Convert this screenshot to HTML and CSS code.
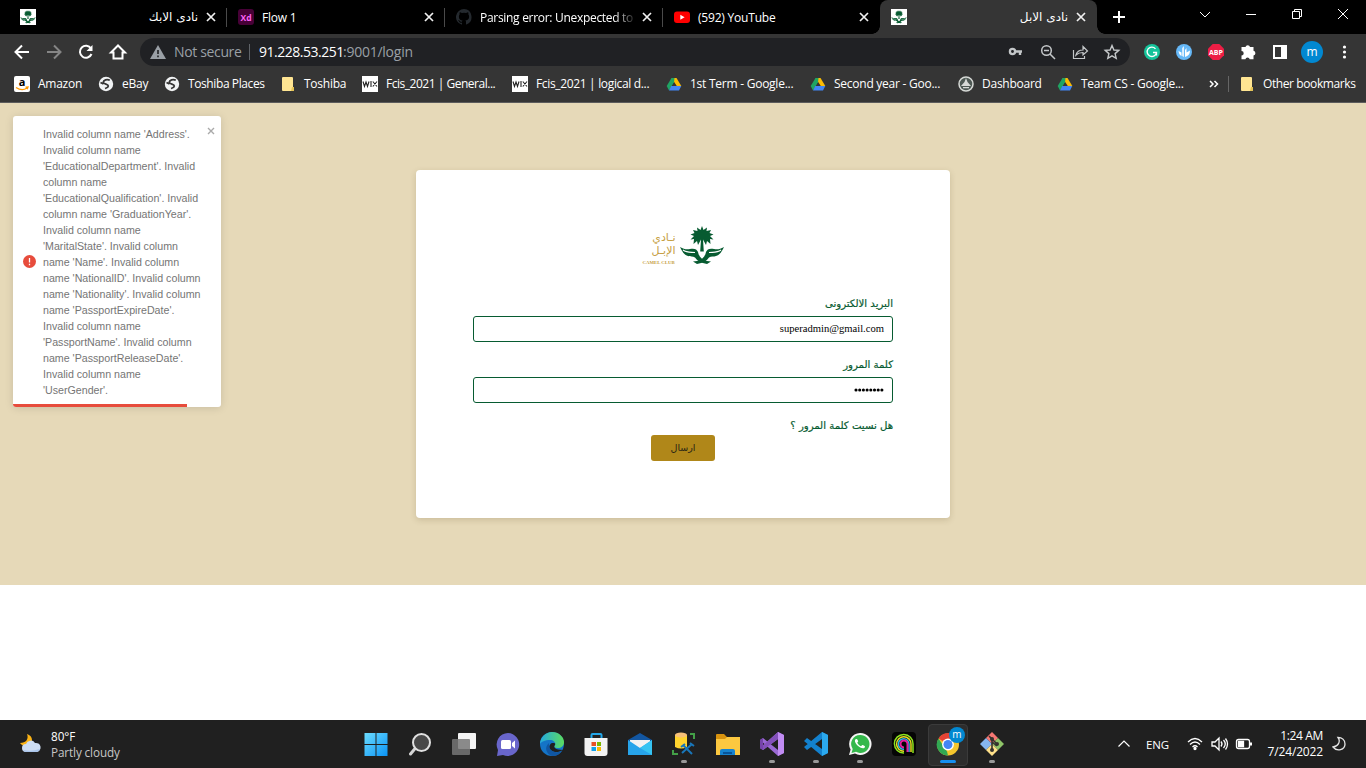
FILE: index.html
```html
<!DOCTYPE html>
<html lang="en">
<head>
<meta charset="utf-8">
<title>نادى الابل</title>
<link rel="stylesheet" href="styles.css">
</head>
<body>
<svg class="defs" width="0" height="0">
  <defs>
    <symbol id="close" viewBox="0 0 10 10"><path d="M1 1l8 8M9 1L1 9" fill="none" stroke="#f1f1f1" stroke-width="1.7"/></symbol>
    <symbol id="palm" viewBox="0 0 44 40">
      <path fill="#075b31" d="M22 0l1.500 4L27 1.500 26.500 5l4.500-1-1.500 3 4 1.500-3.500 1.500 3.500 3.500-3.500-.5.500 5-3.500-3-1 4-3-5.500.8 12h-3.600L21 13.500 18 19l-1-4-3.500 3 .5-5-3.500.5 3.500-3.500-3.500-1.500 4-1.500L13 4l4.500 1L17 1.500 20.500 4z"/>
      <path fill="#075b31" d="M0 21c4 2.500 7 2.500 10 2 4-1 7 0 8 3 1 5 4 8 9 9l4 .5-4 2.500c-6-1-10-3-12-6.500-2-1.500-5-.5-7-1.500-4-1-6-5-8-9z"/>
      <path fill="#075b31" d="M44 21c-4 2.500-7 2.500-10 2-4-1-7 0-8 3-1 5-4 8-9 9l-4 .5 4 2.500c6-1 10-3 12-6.500 2-1.500 5-.5 7-1.500 4-1 6-5 8-9z"/>
      <path d="M3 24c4 3 8 2 12 2.500M41 24c-4 3-8 2-12 2.500" fill="none" stroke="#fff" stroke-width="1.200"/>
    </symbol>
    <symbol id="globe" viewBox="0 0 16 16"><circle cx="8" cy="8" r="7.200" fill="#f1f3f4"/><path d="M11.800 4.300C9 2.800 5.500 4.200 5.300 6.200c0 2.200 5 1.800 5 3.800 0 1.700-2 2-3.300 2.500M2.500 6.500l3 1.500" fill="none" stroke="#353535" stroke-width="1.800"/></symbol>
    <symbol id="folder" viewBox="0 0 16 16"><path d="M2 2q0-1 1-1h9q1 0 1 1v9h1v3q0 1-1 1H3q-1 0-1-1z" fill="#ffe592"/><path d="M12 11h2v3q0 1-1 1h-2z" fill="#e6c555"/></symbol>
    <symbol id="wix" viewBox="0 0 16 16"><path d="M0 0h16v16H0z" fill="#fff"/><path d="M1 5.500l1.500 5L4 6l1.500 4.500L7 5.500M9 5v6M10.800 5.500l4.200 5M15 5.500l-4.200 5" fill="none" stroke="#222" stroke-width="1.100"/></symbol>
    <symbol id="drive" viewBox="0 0 16 16"><path d="M5.500 2h5L15.300 10h-4.500z" fill="#fbbc04"/><path d="M5.500 2h3L8 6.400 3 14.500.7 10z" fill="#1fa463"/><path d="M3 14.500L5.200 10h10.100L13 14.500z" fill="#4285f4"/><path d="M8 6.500l2 3.500H6z" fill="#353535"/></symbol>
  </defs>
</svg>

<div class="tabs">
  <div class="tab first"><span class="fav white"><svg width="16" height="14"><use href="#palm"/></svg></span><span class="name ar">نادى الابك</span><svg class="x"><use href="#close"/></svg></div>
  <div class="tab"><svg class="fav" viewBox="0 0 16 16"><rect width="16" height="16" rx="3" fill="#470137"/><text x="8" y="11.500" text-anchor="middle" class="xd">Xd</text></svg><span class="name">Flow 1</span><svg class="x"><use href="#close"/></svg></div>
  <div class="tab"><svg class="fav" viewBox="0 0 16 16"><path fill="#24292e" d="M8 0a8 8 0 0 0-2.500 15.600c.4.100.5-.2.500-.4v-1.500c-2.200.5-2.700-1-2.700-1-.4-.9-.9-1.200-.9-1.200-.7-.5.100-.5.100-.5.800.1 1.200.8 1.200.8.700 1.300 1.900.9 2.300.7.100-.5.300-.9.500-1.100-1.800-.2-3.600-.9-3.600-4 0-.9.300-1.600.8-2.100-.1-.2-.4-1 .1-2.100 0 0 .7-.2 2.200.8a7.600 7.600 0 0 1 4 0c1.500-1 2.200-.8 2.200-.8.400 1.100.2 1.900.1 2.100.5.600.8 1.300.8 2.100 0 3.100-1.900 3.700-3.700 3.900.3.300.6.800.6 1.500v2.200c0 .2.100.5.500.4A8 8 0 0 0 8 0z"/></svg><span class="name fade">Parsing error: Unexpected tol</span><svg class="x"><use href="#close"/></svg></div>
  <div class="tab plain"><svg class="fav" viewBox="0 0 16 16"><rect y="2.500" width="16" height="11.500" rx="3" fill="#f00"/><path d="M6.300 5.800v5l4.300-2.500z" fill="#fff"/></svg><span class="name">(592) YouTube</span><svg class="x"><use href="#close"/></svg></div>
  <div class="tab active"><span class="fav white"><svg width="16" height="14"><use href="#palm"/></svg></span><span class="name ar">نادى الابل</span><svg class="x"><use href="#close"/></svg></div>
  <svg class="plus" width="14" height="14"><path d="M7 1v12M1 7h12" stroke="#fff" stroke-width="2"/></svg>
  <svg class="winctl" width="170" height="28" fill="none" stroke="#fff"><path d="M15 12l5 5 5-5M61 14.500h10M107.500 11.500h7v7h-7zM109.500 11.500v-2h7v7h-2M153 9l10 10M163 9l-10 10"/></svg>
</div>

<div class="toolbar">
  <svg class="nav" width="132" height="28" fill="none" stroke="#fff" stroke-width="2"><path d="M29 14H16M22 7.500L15.500 14l6.500 6.500"/><path d="M47 14h13M54 7.500l6.500 6.500-6.500 6.500" stroke="#858585"/><path d="M91 10.500A6 6 0 1 0 91.500 16"/><path d="M92.500 7v6h-6z" fill="#fff" stroke="none"/><path d="M113.500 20.500v-6h-2.500l7-7 7 7h-2.500v6z"/></svg>
  <div class="omni">
    <svg class="warn" width="16" height="14"><path d="M8 0l8 14H0z" fill="#9aa0a6"/><path d="M8 5v4M8 10.500v1.800" stroke="#202124" stroke-width="1.600"/></svg>
    <span class="secure">Not secure</span><span class="bar"></span><span class="host">91.228.53.251</span><span class="path">:9001/login</span>
    <svg class="omni-icons" width="121" height="24" fill="none" stroke="#c4c7c9" stroke-width="1.500"><path d="M8.500 11.500H15M13 11.500v3.500" stroke-width="2.400"/><circle cx="5.500" cy="11.500" r="2.600" stroke-width="2.300"/><circle cx="39.500" cy="10.500" r="4.800"/><path d="M37 10.500h5M43 14l5 5"/><path d="M66.500 10v8.500h11V16M69 15c1-4 4-5 7-5V6.500l4.500 4.500-4.500 4v-2.500c-3 0-5 .5-7 2.500z" stroke-width="1.200"/><path d="M105 5.500l1.900 4.500 4.900.4-3.700 3.200 1.100 4.800-4.200-2.500-4.200 2.500 1.100-4.800-3.700-3.200 4.900-.4z" stroke-width="1.400"/></svg>
  </div>
  <svg class="ext" width="226" height="28">
    <circle cx="12" cy="14" r="8" fill="#15c39a"/><path d="M15.500 10.800a4.700 4.700 0 1 0 1 3.700h-3.500M16.500 14.500v3" fill="none" stroke="#fff" stroke-width="1.300"/>
    <circle cx="44" cy="14" r="8" fill="#66b8f7"/><path d="M38.500 13l3 1.500V18q-2.500-1-3-5zM42.300 10l1.500-2v11L42.300 18zM45 19V12l1.500-2v4.500l3.500-2q0 5-5 6.500z" fill="#fff"/>
    <path d="M72.700 6h6.600l4.700 4.700v6.600L79.300 22h-6.600L68 17.300v-6.600z" fill="#ed1e45"/><text x="76" y="16.800" text-anchor="middle" class="abp">ABP</text>
    <path d="M102 9h3.500a2.300 2.300 0 0 1 4.500 0h3.500v3.800a2.400 2.400 0 0 1 0 4.700v3.800h-3.800a2.200 2.200 0 0 0-4.300 0H101.500v-3.900a2.200 2.200 0 0 0 0-4.400V9z" fill="#fff"/>
    <path d="M134 8h12v12h-12z" fill="none" stroke="#fff" stroke-width="2"/><path d="M141 8h6v12h-6z" fill="#fff"/>
    <circle cx="172" cy="14" r="11" fill="#0288d1"/><text x="172" y="18" text-anchor="middle" class="avatar">m</text>
    <g fill="#fff"><circle cx="204.500" cy="9" r="1.600"/><circle cx="204.500" cy="14" r="1.600"/><circle cx="204.500" cy="19" r="1.600"/></g>
  </svg>
</div>

<div class="bookmarks">
  <div><svg class="tile" viewBox="0 0 16 16"><rect width="16" height="16" rx="2" fill="#fff"/><text x="8" y="9.800" text-anchor="middle" class="amz">a</text><path d="M2 11.500q6 4 11 .5M11.500 11.200l2.500-.2-.8 2.200" stroke="#f90" fill="none" stroke-width="1.300"/></svg>Amazon</div>
  <div><svg><use href="#globe"/></svg>eBay</div>
  <div class="places"><svg><use href="#globe"/></svg>Toshiba Places</div>
  <div><svg><use href="#folder"/></svg>Toshiba</div>
  <div class="wix"><svg><use href="#wix"/></svg>Fcis_2021 | General...</div>
  <div class="wix logical"><svg><use href="#wix"/></svg>Fcis_2021 | logical d...</div>
  <div><svg><use href="#drive"/></svg>1st Term - Google...</div>
  <div><svg><use href="#drive"/></svg>Second year - Goo...</div>
  <div><svg viewBox="0 0 16 16"><circle cx="8" cy="8" r="7" fill="#4d5853" stroke="#d6d9d6" stroke-width="1.500"/><path d="M8 2l1.500 4 3.500 4H3l3.500-4zM5 11h6v1.300H5z" fill="#d6d9d6"/></svg>Dashboard</div>
  <div><svg><use href="#drive"/></svg>Team CS - Google...</div>
  <div><svg class="more" width="10" height="8" viewBox="0 0 10 8"><path d="M1 1l3 3-3 3M5.500 1l3 3-3 3" fill="none" stroke="#fff" stroke-width="1.500"/></svg></div>
  <div class="other"><svg><use href="#folder"/></svg>Other bookmarks</div>
</div>

<main class="page">
  <form class="card" dir="rtl">
    <div class="logo" dir="ltr">
      <div class="brand"><span>نـادي</span><span>الإبـل</span><small>CAMEL CLUB</small></div>
      <svg width="44" height="40"><use href="#palm"/></svg>
    </div>
    <label>البريد الالكترونى</label>
    <div class="field">superadmin@gmail.com</div>
    <label>كلمة المرور</label>
    <div class="field dots"><svg width="30" height="6" fill="#000"><circle cx="2" cy="3" r="1.550"/><circle cx="5.700" cy="3" r="1.550"/><circle cx="9.400" cy="3" r="1.550"/><circle cx="13.100" cy="3" r="1.550"/><circle cx="16.800" cy="3" r="1.550"/><circle cx="20.500" cy="3" r="1.550"/><circle cx="24.200" cy="3" r="1.550"/><circle cx="27.900" cy="3" r="1.550"/></svg></div>
    <a class="forgot">هل نسيت كلمة المرور ؟</a>
    <button type="button" class="send">ارسال</button>
  </form>
</main>

<div class="toast">
  <svg class="alert" width="13" height="13"><circle cx="6.500" cy="6.500" r="6.500" fill="#e74c3c"/><path d="M6.500 3v4.500M6.500 8.700v1.500" stroke="#fff" stroke-width="1.300"/></svg>
  <p>Invalid column name 'Address'.<br>Invalid column name<br>'EducationalDepartment'. Invalid<br>column name<br>'EducationalQualification'. Invalid<br>column name 'GraduationYear'.<br>Invalid column name<br>'MaritalState'. Invalid column<br>name 'Name'. Invalid column<br>name 'NationalID'. Invalid column<br>name 'Nationality'. Invalid column<br>name 'PassportExpireDate'.<br>Invalid column name<br>'PassportName'. Invalid column<br>name 'PassportReleaseDate'.<br>Invalid column name<br>'UserGender'.</p>
  <svg class="dismiss" width="8" height="8"><path d="M1 1l6 6M7 1L1 7" stroke="#aaa" stroke-width="1.400"/></svg>
  <div class="progress"></div>
</div>

<footer class="taskbar">
  <div class="weather">
    <svg width="24" height="24"><path d="M8 2c2 5-1 9-7 9 3 5 12 4 12-3 0-3-2-5-5-6z" fill="#fbb315"/><path d="M7 20a4 4 0 0 1 0-8 5 5 0 0 1 9-1 4.600 4.600 0 1 1 2 9z" fill="#cfdef3"/><path d="M4 18q8 2 17-1-1 3-4 3H7q-2 0-3-2z" fill="#a9c4ea"/></svg>
    <div>80°F<br><span>Partly cloudy</span></div>
  </div>
  <div class="apps">
    <div><svg viewBox="0 0 24 24"><defs><linearGradient id="win" x2="1" y2="1"><stop stop-color="#6cdcff"/><stop offset="1" stop-color="#0a93f5"/></linearGradient></defs><path d="M.5 1h11v11H.5zM12.500 1h11v11h-11zM.5 13h11v11H.5zM12.500 13h11v11h-11z" fill="url(#win)"/></svg></div>
    <div><svg viewBox="0 0 24 24"><path d="M7.500 16L2.500 22" stroke="#d5d5d5" stroke-width="3" stroke-linecap="round"/><circle cx="13.500" cy="10.500" r="8.500" fill="#484848" stroke="#e0e0e0" stroke-width="2"/></svg></div>
    <div><svg viewBox="0 0 24 24"><rect x="6" y="1" width="18" height="16" rx="1" fill="#f4f4f4"/><rect y="7" width="18" height="16" rx="1" fill="#777" opacity=".85"/></svg></div>
    <div><svg viewBox="0 0 24 24"><path d="M12 1a11.500 11.500 0 1 1-5 22L1 24l1-6A11.500 11.500 0 0 1 12 1z" fill="#6966cb"/><rect x="5" y="8" width="10" height="9" rx="1.500" fill="#fff"/><path d="M16 11l3-2.500v8L16 14z" fill="#fff"/></svg></div>
    <div><svg viewBox="0 0 24 24"><defs><linearGradient id="edge"><stop stop-color="#24a9df"/><stop offset="1" stop-color="#5cdc5e"/></linearGradient></defs><circle cx="12" cy="12" r="12" fill="#1474c7"/><path d="M0 12C0 5 6 0 12 0c7 0 12 5 12 10 0 4-3 6-6 6-3 0-5-1-3-3 1-3-2-5-5-5-5 0-9 2-10 4z" fill="url(#edge)"/><path d="M15 13c-2 2 0 5 8 5-3 2-8 3-11 1-4-2-3-7 0-8 2 0 4 0 3 2z" fill="#202020"/><path d="M9 11c-5 4-3 11 3 13 5 0 8-2 10-5-7 3-14 0-13-8z" fill="#1056a3"/></svg></div>
    <div><svg viewBox="0 0 24 24"><path d="M7.500 6V3q0-1 1-1h8q1 0 1 1v3" fill="none" stroke="#22a6e8" stroke-width="2"/><path d="M.5 6h23v15q0 3-3 3h-17q-3 0-3-3z" fill="#f3f3f3"/><path d="M7.500 10H12v4H7.500z" fill="#e74f24"/><path d="M13 10h4v4h-4z" fill="#7ab700"/><path d="M7.500 15H12v4H7.500z" fill="#109fe9"/><path d="M13 15h4v4h-4z" fill="#fab900"/></svg></div>
    <div><svg viewBox="0 0 24 24"><path d="M0 8l12-7 12 7v5H0z" fill="#1256a1"/><path d="M2 8h20v6l-10 5L2 13z" fill="#f2f2f2"/><path d="M0 8l12 8 12-8v15H0z" fill="#27a4ea"/><path d="M24 8v15L12 16z" fill="#36c4f2"/></svg></div>
    <div class="open"><svg viewBox="0 0 24 24"><path d="M3 3h12v12q-6 3-12 0z" fill="#ffd32e"/><ellipse cx="9" cy="3" rx="6" ry="2.500" fill="#f7c078"/><path d="M18 2h4v5M1 18v4h5" fill="none" stroke="#43a047" stroke-width="2"/><path d="M10 21l10-9M11 13l9 9M18 11l4 3M9 15l4-3" stroke="#1976b9" stroke-width="2"/></svg></div>
    <div><svg viewBox="0 0 24 24"><path d="M0 3q0-1 1-1h7l3 3h12q1 0 1 1v5H0z" fill="#d8930f"/><path d="M0 7h9l2-2h13v18H0z" fill="#fcc840"/><path d="M4 23v-4q0-2 2-2h11q2 0 2 2v4z" fill="#1683cf"/><path d="M7 20h9v2H7z" fill="#075499"/></svg></div>
    <div class="open"><svg viewBox="0 0 24 24"><path d="M18 0l6 3v18l-6 3L0 8l3-2 15 12V7L3 18l-3-2z" fill="#9a69d4"/><path d="M18 0l6 3v18l-6 3z" fill="#c18cf3"/><path d="M18 0v7L3 18l-3-2z" fill="#8350ba"/><path d="M0 8l3-2v12l-3-2z" fill="#7543aa"/></svg></div>
    <div class="open"><svg viewBox="0 0 24 24"><path d="M18 0L0 15l3 3L18 7v10L3 6 0 9l18 15 6-3V3z" fill="#1381ce"/><path d="M18 0l6 3v18l-6 3z" fill="#2ba9ee"/></svg></div>
    <div class="open"><svg viewBox="0 0 24 24"><path d="M12 1a11 11 0 1 1-5 20.500L1 23l1.600-5.500A11 11 0 0 1 12 1z" fill="#f5f5f5"/><path d="M12 3a9 9 0 1 1-4 16.800L3.500 21l1.200-4A9 9 0 0 1 12 3z" fill="#34b84b"/><path d="M8 7c-2 1-1 4 1.500 6.500S16 17.500 17 15c.5-1-2.500-2.500-3-1.800l-1 1C11 13.500 9.500 11.500 9.300 10.500l.9-1C10 8 9 6.500 8 7z" fill="#fff"/></svg></div>
    <div><svg viewBox="0 0 24 24"><rect width="24" height="24" rx="4" fill="#050505"/><g fill="none" stroke-width="1.500"><path d="M21 21V12a9.300 9.300 0 1 0-9 9" stroke="#8ee51d"/><path d="M19 20v-8a7.200 7.200 0 1 0-7 7.200" stroke="#e9dd22"/><path d="M17 20v-8a5.300 5.300 0 1 0-5 5.300" stroke="#28b7e5"/><path d="M15.500 20v-8a3.500 3.500 0 1 0-3.500 3.500" stroke="#e41e9f" stroke-width="2"/></g></svg></div>
    <div class="open current"><svg viewBox="0 0 24 24"><circle cx="12" cy="12.500" r="11" fill="#f5c62d"/><path d="M12 12.500L2.500 6.500a11 11 0 0 1 19 0z" fill="#e54335"/><path d="M2.500 6.500l8.500 13 1 4A11 11 0 0 1 2.500 6.500z" fill="#31a853"/><circle cx="12" cy="12.500" r="5.900" fill="#fff"/><circle cx="12" cy="12.500" r="4.500" fill="#4285f4"/></svg><span class="badge">m</span></div>
    <div class="open"><svg viewBox="0 0 24 24"><path d="M12 0l6 6-6 6-6-6z" fill="#f57773"/><path d="M6 6l6 6-6 6-6-6z" fill="#86b6ef"/><path d="M18 6l6 6-6 6-6-6z" fill="#8fc568"/><path d="M12 12l6 6-6 6-6-6z" fill="#ffe18a"/><path d="M9 4l7 7M12 7v12M12 10l5 4" stroke="#35322e" stroke-width="1.600"/><circle cx="12" cy="7" r="2" fill="#35322e"/><circle cx="17" cy="12" r="2" fill="#35322e"/><circle cx="12" cy="18" r="2" fill="#35322e"/></svg></div>
  </div>
  <div class="tray">
    <svg width="14" height="10"><path d="M1.500 7.500L7 2l5.500 5.500" fill="none" stroke="#fff" stroke-width="1.200"/></svg>
    <span class="lang">ENG</span>
    <svg class="status" width="68" height="20" fill="none" stroke="#fff" stroke-width="1.300"><path d="M2 8q7-7 14 0M4 10.500q5-5 10 0M6.500 13q2.500-2.500 5 0"/><circle cx="9" cy="14.500" r="1" fill="#fff"/><path d="M26 8h3l4-4v12l-4-4h-3zM35 7.500q2 2.500 0 5M37.500 6q3.500 4 0 8M39.500 4.500q4 5.500 0 11"/><rect x="50.500" y="5.500" width="13" height="9" rx="2"/><path d="M52.500 7.500h5v5h-5z" fill="#fff"/><path d="M65 8.500v3" stroke-width="2"/></svg>
    <div class="clock"><span>1:24 AM</span><br>7/24/2022</div>
    <svg class="moon" width="15" height="16"><path d="M6 1.500c3 4 0 9-5 9.500 4 5 12 3 12-3 0-4-3-6.500-7-6.500z" fill="none" stroke="#e5e5e5" stroke-width="1.300"/></svg>
  </div>
</footer>
</body>
</html>
```
FILE: styles.css
```css
* { box-sizing: border-box; }
body { margin: 0; width: 1366px; height: 768px; overflow: hidden; background: #fff; font: 12px "Open Sans", "DejaVu Sans", sans-serif; display: flex; flex-direction: column; position: relative; }
svg { display: block; flex: none; }
.defs { position: absolute; }
.tabs { height: 34px; background: #000; display: flex; color: #fff; flex: none; }
.tab { width: 218px; display: flex; align-items: center; padding: 0 11px; position: relative; flex: none; }
.tab.first { width: 227px; padding-left: 20px; }
.tab.plain { width: 217px; }
.tab:not(.active):not(.plain)::after { content: ""; position: absolute; right: 0; top: 8px; width: 1px; height: 19px; background: #4a4a4a; }
.tab.active { background: #353535; border-radius: 8px 8px 0 0; width: 217px; }
.tab.active::before { content: ""; position: absolute; left: -8px; bottom: 0; width: 8px; height: 8px; background: radial-gradient(circle at 0 0, #000 7.5px, #353535 8px); }
.tab.active::after { content: ""; position: absolute; right: -8px; bottom: 0; width: 8px; height: 8px; background: radial-gradient(circle at 100% 0, #000 7.5px, #353535 8px); }
.fav { width: 16px; height: 16px; flex: none; }
.white { background: #fff; padding-top: 1px; }
.name { flex: 1; min-width: 0; margin: 0 8px; white-space: nowrap; letter-spacing: -0.2px; }
.ar { text-align: right; direction: rtl; font-family: "DejaVu Sans", sans-serif; font-size: 12px; letter-spacing: 0; }
.fade { letter-spacing: -0.3px; margin-right: 4px; -webkit-mask-image: linear-gradient(to right, #000 134px, transparent 157px); }
.fade + .x { margin-left: 4px; }
.x { width: 10px; height: 10px; }
.xd { font: bold 8.5px "Open Sans", sans-serif; fill: #ff61f6; }
.plus { margin: 10px 0 0 15px; }
.winctl { margin-left: 59px; }
.toolbar { height: 34px; padding-top: 4px; display: flex; background: #353535; flex: none; }
.nav { margin-right: 8px; }
.omni { width: 990px; height: 28px; border-radius: 14px; background: #202124; display: flex; align-items: center; padding-left: 10px; font-size: 14px; color: #9aa0a6; white-space: nowrap; }
.secure { margin-left: 8px; width: 75px; letter-spacing: -0.35px; padding-bottom: 1px; }
.bar { width: 1px; height: 16px; background: #5f6368; margin-right: 9px; }
.host { color: #fff; width: 84px; letter-spacing: -0.48px; padding-bottom: 1px; }
.path { letter-spacing: -0.25px; padding-bottom: 1px; }
.omni-icons { margin-left: auto; margin-right: 2px; }
.ext { margin-left: 10px; }
.abp { font: bold 7px "Open Sans", sans-serif; fill: #fff; }
.avatar { font-size: 12px; fill: #fff; }
.bookmarks { height: 35px; background: #353535; border-bottom: 1px solid #5c5c5c; display: grid; grid-template-columns: 84px 66px 116px 82px 150px 154px 144px 148px 99px 152px 30px 127px; padding-left: 14px; color: #fff; flex: none; }
.bookmarks div { display: flex; align-items: center; gap: 8px; white-space: nowrap; letter-spacing: -0.25px; height: 31px; }
.bookmarks svg { width: 16px; height: 16px; }
.bookmarks .tile { overflow: visible; }
.bookmarks .wix { letter-spacing: -0.48px; }
.bookmarks .logical { letter-spacing: -0.34px; }
.bookmarks .places { letter-spacing: -0.4px; }
.bookmarks .more { width: 10px; height: 8px; }
.bookmarks .other { letter-spacing: -0.4px; }
.bookmarks .other::before { content: ""; width: 1px; height: 16px; background: #666; margin: 0 2px 0 -11px; }
.amz { font: bold 11px "Open Sans", sans-serif; }
.page { height: 482px; background: #e6d9b8; padding-top: 67px; flex: none; }
.card { width: 534px; height: 348px; margin: 0 auto; background: #fff; border-radius: 4px; box-shadow: 0 2px 6px rgba(80, 60, 20, .18); padding: 55px 57px 0; display: flex; flex-direction: column; font-family: "DejaVu Sans", sans-serif; color: #075b31; }
.logo { height: 42px; margin-bottom: 30px; display: flex; align-items: center; justify-content: center; gap: 4px; }
.brand { width: 33px; display: flex; flex-direction: column; align-items: flex-end; color: #c6a044; font: 11px/13px "DejaVu Sans", sans-serif; padding-top: 5px; }
.brand span { white-space: nowrap; }
.brand small { font: bold 4.8px/7px "Liberation Serif", serif; white-space: nowrap; width: 33px; margin-top: 2px; }
.card label, .forgot { font-size: 10.15px; line-height: 14px; height: 14px; -webkit-text-stroke: .2px #075b31; }
.field { height: 26px; border: 1px solid #075b31; border-radius: 3px; margin: 5px 0 16px; padding: 0 8px 1px; display: flex; align-items: center; font: 10.6px "Liberation Serif", serif; color: #000; }
.forgot { margin-bottom: 2px; }
.send { width: 64px; height: 26px; padding: 0 0 2px; border: 0; border-radius: 3px; background: #b08719; align-self: center; font: 9.5px "DejaVu Sans", sans-serif; color: #282515; }
.toast { position: absolute; left: 13px; top: 116px; width: 208px; height: 291px; background: #fff; border-radius: 3px; box-shadow: 0 1px 8px rgba(0, 0, 0, .13); display: flex; padding: 10px 6px 8px 10px; overflow: hidden; }
.alert { align-self: center; margin: 0 7px 2px 0; }
.toast p { margin: 0; width: 161px; white-space: nowrap; font: 10.67px/16px "Liberation Sans", sans-serif; color: #757575; }
.dismiss { margin: 1px 0 0 3px; }
.progress { position: absolute; left: 0; bottom: 0; width: 174px; height: 3px; background: #e74c3c; }
.taskbar { margin-top: auto; height: 48px; background: #202020; display: flex; align-items: center; color: #fff; flex: none; }
.weather { width: 354px; padding-left: 19px; display: flex; align-items: center; gap: 8px; line-height: 16px; font-size: 11.7px; flex: none; }
.weather span { color: #c7c7c7; letter-spacing: -0.1px; }
.apps { display: flex; flex: none; }
.apps > div { width: 44px; height: 48px; position: relative; display: flex; align-items: center; justify-content: center; }
.apps svg { width: 24px; height: 24px; z-index: 1; }
.open::after { content: ""; position: absolute; bottom: 5px; left: 19px; width: 6px; height: 3px; border-radius: 2px; background: #999; }
.current::before { content: ""; position: absolute; left: 2px; top: 4px; width: 38px; height: 40px; background: #2d2d2d; border: 1px solid #3b3b3b; border-radius: 4px; }
.current::after { left: 14px; width: 16px; background: #168ff0; }
.badge { position: absolute; left: 23px; top: 7px; width: 16px; height: 16px; border-radius: 50%; background: #0288d1; font-size: 10px; line-height: 14px; text-align: center; z-index: 2; }
.tray { flex: 1; display: flex; align-items: center; padding-left: 103px; }
.lang { margin-left: 15px; width: 40px; font-size: 11.5px; letter-spacing: -.2px; }
.status { margin-left: 0; }
.clock { width: 69px; text-align: right; line-height: 16px; font-size: 12px; letter-spacing: -.15px; }
.clock span { letter-spacing: -.35px; }
.moon { margin-left: 9px; }
```
